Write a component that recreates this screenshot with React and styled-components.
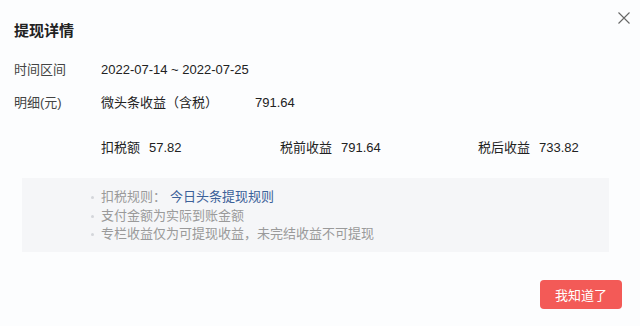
import React from 'react';
import styled, { createGlobalStyle } from 'styled-components';

const Global = createGlobalStyle`
 html, body {
  margin: 0;
  padding: 0;
  background: #fcfdfe;
 }
 body {
  font-family: 'Liberation Sans', 'Noto Sans CJK SC', sans-serif;
  color: #222;
 }
`;

const Dialog = styled.div`
 position: relative;
 width: 640px;
 height: 326px;
 box-sizing: border-box;
 padding: 20px 18px 0 14px;
 display: flex;
 flex-direction: column;
`;

const Title = styled.h2`
 margin: 0;
 font-family: 'Noto Sans CJK SC', sans-serif;
 font-size: 15px;
 line-height: 20px;
 font-weight: bold;
 color: #222;
`;

const Close = styled.button`
 position: absolute;
 top: 11px;
 right: 9px;
 width: 14px;
 height: 14px;
 padding: 0;
 border: 0;
 background: none;
 cursor: pointer;
 display: flex;
`;

const Row = styled.div`
 display: flex;
 align-items: baseline;
 height: 20px;
 line-height: 20px;
 margin-top: ${(p) => p.$top}px;
 font-size: 13px;
`;

const Label = styled.span`
 width: 87px;
 flex: none;
 color: #444;
`;

const Text = styled.span`
 color: #222;
 width: ${(p) => (p.$w ? `${p.$w}px` : 'auto')};
 flex: none;
`;

const Stats = styled.div`
 display: grid;
 grid-template-columns: 179px 198px auto;
 align-items: baseline;
 height: 20px;
 line-height: 20px;
 margin-top: 25px;
 padding-left: 87px;
 font-size: 13px;
`;

const Stat = styled.span`
 display: flex;
 align-items: baseline;
 gap: 9px;
 color: #222;
`;

const Notes = styled.ul`
 margin: 20px 13px 0 8px;
 padding: 10px 0 8px 69px;
 list-style: none;
 background: #f5f6f8;
 font-size: 13px;
 line-height: 18.5px;
 color: #9a9a9a;
`;

const Note = styled.li`
 position: relative;
 padding-left: 10px;
 &::before {
  content: '';
  position: absolute;
  left: 0;
  top: 8px;
  width: 3px;
  height: 3px;
  border-radius: 50%;
  background: #d4d6da;
 }
`;

const Link = styled.a`
 color: #3c6199;
 text-decoration: none;
 margin-left: 4px;
`;

const Footer = styled.div`
 display: flex;
 justify-content: flex-end;
 margin-top: 28px;
`;

const Button = styled.button`
 width: 82px;
 height: 29px;
 border: 0;
 border-radius: 4px;
 background: #f35a57;
 color: #fff;
 font-family: 'Noto Sans CJK SC', sans-serif;
 font-size: 13px;
 cursor: pointer;
`;

export default function App() {
 return (
  <>
   <Global />
   <Dialog>
    <Title>提现详情</Title>
    <Close aria-label='关闭'>
     <svg width='14' height='14' viewBox='0 0 14 14'>
      <path d='M1.5 1.5 L12.5 12.5 M12.5 1.5 L1.5 12.5' stroke='#666' strokeWidth='1.1' />
     </svg>
    </Close>
    <Row $top={20}>
     <Label>时间区间</Label>
     <Text>2022-07-14 ~ 2022-07-25</Text>
    </Row>
    <Row $top={13}>
     <Label>明细(元)</Label>
     <Text $w={154}>微头条收益（含税）</Text>
     <Text>791.64</Text>
    </Row>
    <Stats>
     <Stat><span>扣税额</span><span>57.82</span></Stat>
     <Stat><span>税前收益</span><span>791.64</span></Stat>
     <Stat><span>税后收益</span><span>733.82</span></Stat>
    </Stats>
    <Notes>
     <Note>扣税规则：<Link href='#'>今日头条提现规则</Link></Note>
     <Note>支付金额为实际到账金额</Note>
     <Note>专栏收益仅为可提现收益，未完结收益不可提现</Note>
    </Notes>
    <Footer>
     <Button>我知道了</Button>
    </Footer>
   </Dialog>
  </>
 );
}
